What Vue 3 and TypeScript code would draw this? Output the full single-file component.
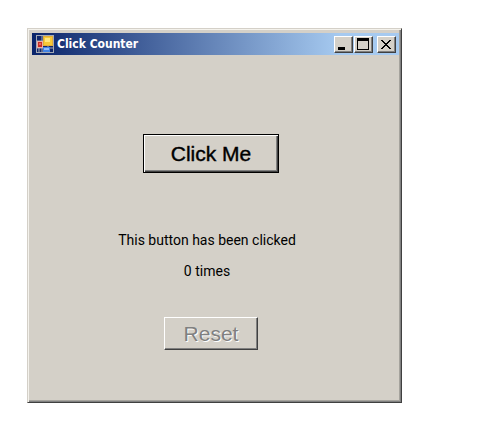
<script setup lang="ts">
import { computed, ref } from 'vue'

const count = ref<number>(0)
const canReset = computed<boolean>(() => count.value > 0)

function increment(): void {
  count.value += 1
}

function reset(): void {
  count.value = 0
}
</script>

<template>
  <main class="desktop">
    <section class="window">
      <header class="titlebar">
        <svg class="app-icon" viewBox="0 0 18 18" aria-hidden="true">
          <rect width="18" height="18" fill="#a3a9b5" />
          <rect x="1" y="1" width="16" height="16" fill="#12286b" />
          <path d="M1 6h6M6 1v16M1 13h16M12 11v6M3 13v4" stroke="#a3a9b5" fill="none" />
          <rect x="1" y="6" width="6" height="7" fill="#e9b0a8" />
          <rect x="2" y="7" width="4" height="5" fill="#c92d25" />
          <rect x="3" y="8" width="2" height="2" fill="#e5675b" />
          <rect x="7" y="1" width="10" height="10" fill="#e0ad36" />
          <rect x="8" y="2" width="8" height="8" fill="#f6c936" />
          <rect x="9" y="3" width="5" height="4" fill="#ffe77d" />
          <rect x="7" y="12" width="7" height="5" fill="#4384e4" />
          <rect x="8" y="13" width="5" height="2" fill="#91bdfa" />
        </svg>
        <h1 class="title">Click Counter</h1>
        <div class="controls">
          <button class="control" type="button" aria-label="Minimize">
            <svg viewBox="0 0 16 14" aria-hidden="true"><path d="M3 10h7v3H3z" /></svg>
          </button>
          <button class="control" type="button" aria-label="Maximize">
            <svg viewBox="0 0 16 14" aria-hidden="true">
              <path d="M2 1h12v12H2zM3 4v8h10V4z" fill-rule="evenodd" />
            </svg>
          </button>
          <button class="control close" type="button" aria-label="Close">
            <svg viewBox="0 0 16 14" aria-hidden="true">
              <path d="M3 3h2v1h1v1h1v1h2V5h1V4h1V3h2v1h-1v1h-1v1h-1v1H9v1h1v1h1v1h1v1h1v1h-2v-1h-1v-1H9V9H7v1H6v1H5v1H3v-1h1v-1h1V9h1V8h1V7H6V6H5V5H4V4H3z" />
            </svg>
          </button>
        </div>
      </header>

      <div class="content">
        <div class="action">
          <button class="button primary" type="button" @click="increment">Click Me</button>
        </div>
        <div class="status" aria-live="polite">
          <p>This button has been clicked</p>
          <p>{{ count }} times</p>
        </div>
        <div class="action">
          <button class="button secondary" type="button" :disabled="!canReset" @click="reset">Reset</button>
        </div>
      </div>
    </section>
  </main>
</template>

<style>
body {
  margin: 0;
  background: #fff;
}
</style>

<style scoped>
.desktop {
  padding: 28px 78px 28px 27px;
}

.window {
  padding: 2px 1px 52px 2px;
  background: #d4d0c8;
  border: 1px solid;
  border-color: #d4d0c8 #404040 #404040 #d4d0c8;
  box-shadow: inset 1px 1px #f4f2ec, inset -1px -1px #808080, inset -2px -2px #a5a39d;
}

.titlebar {
  display: flex;
  align-items: center;
  height: 22px;
  margin: 2px 1px 0 2px;
  padding: 0 3px 0 4px;
  background: linear-gradient(90deg, #0a246a, #a6caf0 84%);
}

.app-icon {
  width: 18px;
  height: 18px;
}

.title {
  flex: 1;
  margin: 0 0 0 3px;
  color: #fff;
  font: bold 12px/16px "DejaVu Sans Condensed", "DejaVu Sans", sans-serif;
}

.controls {
  display: flex;
  gap: 1px;
}

.control {
  width: 19px;
  height: 17px;
  padding: 0;
  background: #d4d0c8;
  border: 1px solid;
  border-color: #fff #404040 #404040 #fff;
  box-shadow: inset -1px -1px #808080;
}

.control svg {
  display: block;
  width: 16px;
  height: 14px;
}

.close {
  margin-left: 3px;
}

.content {
  display: grid;
  padding-top: 79px;
  color: #000;
}

.action {
  display: flex;
  justify-content: center;
  padding-right: 8px;
}

.button {
  padding: 0;
  background: #d4d0c8;
  border: 1px solid;
  font-family: "Liberation Sans", Arial, sans-serif;
  font-size: 21px;
  line-height: 24px;
}

.primary {
  width: 136px;
  height: 39px;
  color: #000;
  border-color: #000;
  box-shadow: inset 1px 1px #fff, inset -1px -1px #404040, inset -2px -2px #808080;
  -webkit-text-stroke: 0.4px #000;
}

.secondary {
  width: 94px;
  height: 33px;
  border-color: #fff #404040 #404040 #fff;
  box-shadow: inset -1px -1px #808080;
}

.secondary:disabled {
  color: #808080;
  text-shadow: 1px 1px #fff;
}

.status {
  display: grid;
  gap: 15px;
  margin: 59px 0 38px;
  padding-right: 16px;
  text-align: center;
  font: 14px/16px Roboto, "Liberation Sans", sans-serif;
}

.status p {
  margin: 0;
}
</style>
